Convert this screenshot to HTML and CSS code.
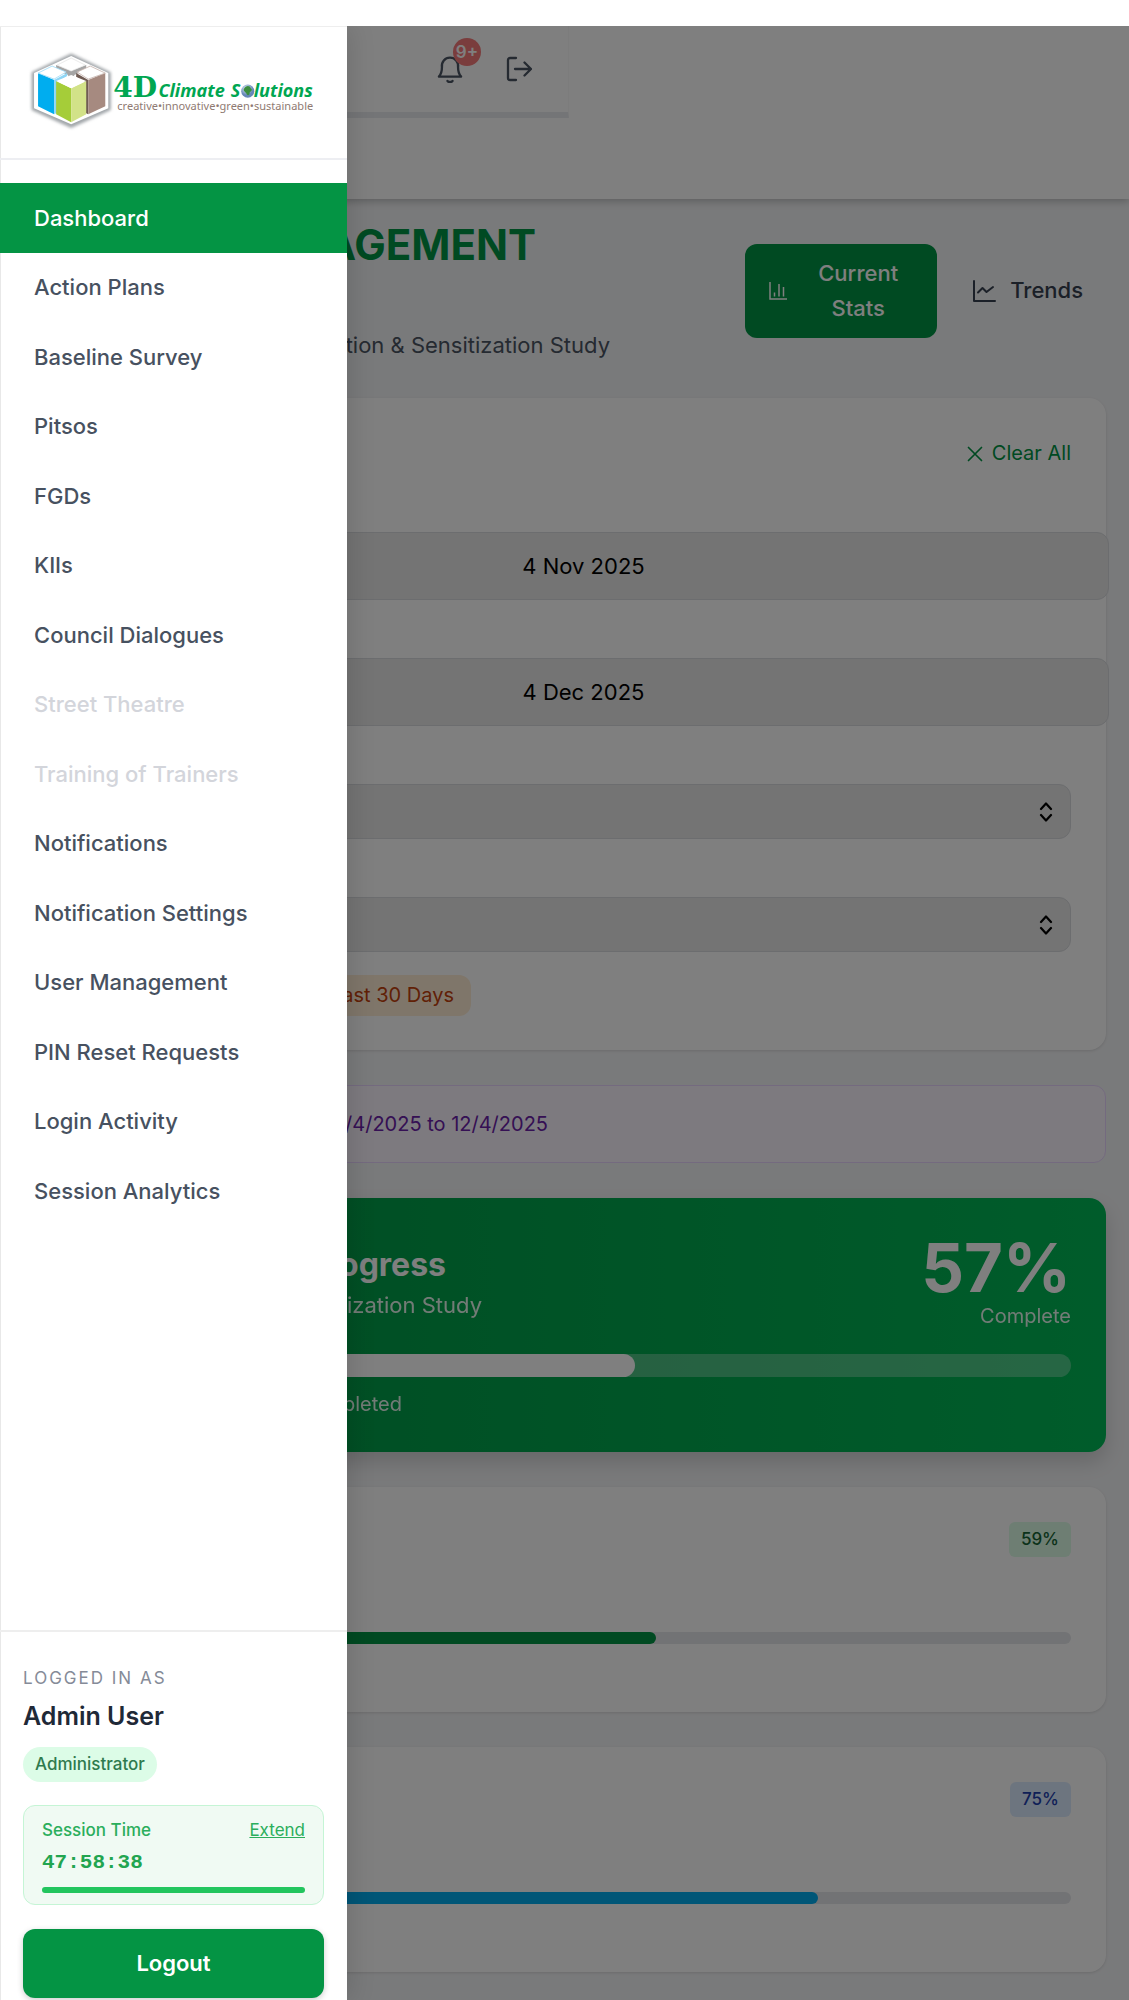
FILE: index.html
```html
<!DOCTYPE html>
<html lang="en">
<head>
<meta charset="utf-8">
<meta name="viewport" content="width=device-width, initial-scale=1">
<title>Dashboard</title>
<link rel="stylesheet" href="styles.css">
</head>
<body>
<div class="app">
  <header class="topbar">
    <div class="toolbar">
      <button class="icon-btn" type="button" aria-label="Notifications">
        <svg width="28" height="28" viewBox="0 0 24 24" fill="none" stroke="currentColor" stroke-width="2" stroke-linecap="round" stroke-linejoin="round"><path d="M2.500 18.500h19c-2-2.200-2.600-4.300-2.600-8A6.900 7.200 0 0 0 12 2.200a6.900 7.200 0 0 0-6.900 8.300c0 3.700-.6 5.800-2.600 8z"/><path d="M9.800 22.200c.8 1.300 3.600 1.300 4.400 0"/></svg>
        <span class="count">9+</span>
      </button>
      <button class="icon-btn" type="button" aria-label="Sign out">
        <svg width="26" height="26" viewBox="0 0 26 26" fill="none" stroke="currentColor" stroke-width="2.300" stroke-linecap="round" stroke-linejoin="round"><path d="M10 2H4a2 2 0 0 0-2 2v18a2 2 0 0 0 2 2h6M9 13h16M18.500 6.500L25 13l-6.500 6.500"/></svg>
      </button>
    </div>
  </header>

  <main class="content">
    <section class="page-head">
      <div class="titles">
        <h1>MANAGEMENT</h1>
        <p class="subtitle">Collection &amp; Sensitization Study</p>
      </div>
      <div class="views">
        <button class="view active" type="button">
          <svg width="20" height="20" viewBox="0 0 20 20" fill="none" stroke="currentColor" stroke-width="1.500"><path d="M2 1v17h17M6.500 15.500v-4M11 15.500V3M15.500 15.500V6"/></svg>
          <span>Current Stats</span>
        </button>
        <button class="view" type="button">
          <svg width="24" height="24" viewBox="0 0 24 24" fill="none" stroke="currentColor" stroke-width="2" stroke-linecap="round" stroke-linejoin="round"><path d="M2 2v20h21M6 13.500l4.500-4.500 4 4 6.500-5"/></svg>
          <span>Trends</span>
        </button>
      </div>
    </section>

    <section class="card filters" aria-label="Filters">
      <div class="filters-head">
        <button class="clear" type="button">
          <svg width="16" height="16" viewBox="0 0 16 16" stroke="currentColor" stroke-width="1.700" stroke-linecap="round"><path d="M1.500 1.500l13 13M14.500 1.500l-13 13"/></svg>
          Clear All
        </button>
      </div>
      <div class="field wide">
        <input type="text" value="4 Nov 2025" aria-label="Start date">
      </div>
      <div class="field wide">
        <input type="text" value="4 Dec 2025" aria-label="End date">
      </div>
      <div class="field picker">
        <select aria-label="District"></select>
        <svg width="14" height="20" viewBox="0 0 14 20" fill="none" stroke="#000" stroke-width="2.200" stroke-linecap="round" stroke-linejoin="round"><path d="M2 7l5-5.500L12 7M2 13l5 5.500 5-5.500"/></svg>
      </div>
      <div class="field picker">
        <select aria-label="Council"></select>
        <svg width="14" height="20" viewBox="0 0 14 20" fill="none" stroke="#000" stroke-width="2.200" stroke-linecap="round" stroke-linejoin="round"><path d="M2 7l5-5.500L12 7M2 13l5 5.500 5-5.500"/></svg>
      </div>
      <div class="presets">
        <button class="preset" type="button">Last 30 Days</button>
      </div>
    </section>

    <div class="notice"><p>11/4/2025 to 12/4/2025</p></div>

    <section class="progress-card">
      <div class="progress-head">
        <div>
          <h2>Progress</h2>
          <p class="study">Sensitization Study</p>
        </div>
        <div class="total">
          <strong>57%</strong>
          <span>Complete</span>
        </div>
      </div>
      <div class="bar bar-lg"><div class="fill" style="width:57%"></div></div>
      <p class="done">completed</p>
    </section>

    <section class="card stat">
      <span class="tag tag-green">59%</span>
      <div class="bar"><div class="fill green" style="width:59%"></div></div>
    </section>

    <section class="card stat">
      <span class="tag tag-blue">75%</span>
      <div class="bar"><div class="fill blue" style="width:75%"></div></div>
    </section>
  </main>

  <div class="scrim"></div>

  <aside class="drawer">
    <div class="brand">
      <svg class="logo" viewBox="0 0 300 86" role="img" aria-label="4D Climate Solutions">
        <defs>
          <filter id="soft" x="-20%" y="-20%" width="140%" height="140%"><feGaussianBlur stdDeviation="1.500"/></filter>
          <radialGradient id="globe" cx=".4" cy=".3"><stop offset="0" stop-color="#e4edf7"/><stop offset="1" stop-color="#6687b8"/></radialGradient>
        </defs>
        <path d="M48 6L86 24v36L48 77 10 60V24z" fill="#a3a7ab" stroke="#a3a7ab" stroke-width="3" stroke-linejoin="round" filter="url(#soft)"/>
        <path d="M48 7L85 24v35L48 75 11 59V24z" fill="#fff"/>
        <path d="M33 16l15 6 15-6v5l-12 5v4h-6v-4l-12-5z" fill="#a5a5a5"/>
        <path d="M48 9l14 7-14 6-14-6z" fill="#fff" stroke="#ddd" stroke-width=".6"/>
        <path d="M15 24l16 7v34l-16-8z" fill="#00adef"/>
        <path d="M31 31l13-7v3l-9 6v30l-4 2z" fill="#8fd6f5"/>
        <path d="M15 24l14-7 14 6-12 7z" fill="#fff" stroke="#9bdaf6" stroke-width=".8"/>
        <path d="M53 24l12 7v34l-4-2V33l-8-5z" fill="#705c54"/>
        <path d="M65 31l17-7v33l-17 8z" fill="#a68a80"/>
        <path d="M54 23l13-6 15 7-17 6z" fill="#fff" stroke="#c4b2ab" stroke-width=".8"/>
        <path d="M33 32l15 7v34l-15-8z" fill="#a5cd39"/>
        <path d="M48 39l15-7v33l-15 8z" fill="#d2e288"/>
        <path d="M33 32l15-6 15 6-15 7z" fill="#fff"/>
        <g fill="#00a651">
          <text x="90" y="48" class="logo-4d">4D</text>
          <text x="135" y="48" class="logo-name">Climate</text>
          <text x="207" y="48" class="logo-name">S</text>
          <text x="230" y="48" class="logo-name">lutions</text>
        </g>
        <circle cx="224" cy="42" r="6.500" fill="url(#globe)"/>
        <path d="M220 40c2-4 6-4 7-1 2 1 1 3-1 4 0 3-2 4-3 2-1-3-3-2-3-5z" fill="#3c8f3f"/>
        <text x="94" y="61" class="logo-tag">creative•innovative•green•sustainable</text>
      </svg>
    </div>
    <nav class="menu" aria-label="Main">
      <a class="active" href="#">Dashboard</a>
      <a href="#">Action Plans</a>
      <a href="#">Baseline Survey</a>
      <a href="#">Pitsos</a>
      <a href="#">FGDs</a>
      <a href="#">KIIs</a>
      <a href="#">Council Dialogues</a>
      <a class="disabled" href="#" aria-disabled="true">Street Theatre</a>
      <a class="disabled" href="#" aria-disabled="true">Training of Trainers</a>
      <a href="#">Notifications</a>
      <a href="#">Notification Settings</a>
      <a href="#">User Management</a>
      <a href="#">PIN Reset Requests</a>
      <a href="#">Login Activity</a>
      <a href="#">Session Analytics</a>
    </nav>
    <div class="account">
      <p class="caption">LOGGED IN AS</p>
      <p class="user">Admin User</p>
      <span class="role">Administrator</span>
      <div class="session">
        <div class="session-head"><span>Session Time</span><a href="#">Extend</a></div>
        <p class="clock">47:58:38</p>
        <div class="session-bar"></div>
      </div>
      <button class="logout" type="button">Logout</button>
    </div>
  </aside>
</div>
</body>
</html>
```
FILE: styles.css
```css
* { box-sizing: border-box; }

body {
  margin: 0;
  padding-top: 26px;
  background: #fff;
  font-family: Inter, "Liberation Sans", sans-serif;
  font-size: 22px;
  line-height: 35px;
  color: #374151;
}

h1, h2, p { margin: 0; }
svg { display: block; flex: none; }
button, input, select { font: inherit; color: inherit; }
button { border: 0; background: none; padding: 0; }

.app {
  position: relative;
  min-height: calc(100vh - 26px);
  overflow: hidden;
  background: #f3f4f6;
}

/* Top bar */
.topbar {
  min-height: 173px;
  background: #fff;
  box-shadow: 0 2px 8px rgba(0, 0, 0, .25);
}
.toolbar {
  display: flex;
  justify-content: flex-end;
  align-items: center;
  gap: 42px;
  max-width: 569px;
  height: 92px;
  padding-right: 36px;
  border-right: 1px solid #f8f8f8;
  border-bottom: 6px solid #e9ebef;
}
.icon-btn { position: relative; color: #4b5563; }
.count {
  position: absolute;
  left: 17px;
  top: -17px;
  width: 28px;
  height: 28px;
  border-radius: 50%;
  background: #f57a7a;
  color: #fff;
  font-size: 17px;
  font-weight: 600;
  line-height: 29px;
  text-align: center;
}

/* Content */
.content {
  display: flex;
  flex-direction: column;
  gap: 35px;
  padding: 19px 23px 27px;
}
.page-head {
  display: flex;
  align-items: center;
  justify-content: space-between;
}
.titles {
  width: 587px;
  text-align: right;
}
h1 {
  min-height: 104px;
  margin-right: 74px;
  color: #009444;
  font-size: 42px;
  font-weight: 700;
  line-height: 54px;
}
.subtitle { margin-top: 6px; color: #4b5563; }
.views { display: flex; gap: 12px; }
.view {
  display: flex;
  align-items: center;
  gap: 14px;
  padding: 12px 23px;
  border-radius: 12px;
  font-weight: 500;
}
.view.active {
  width: 192px;
  background: #009444;
  color: #fff;
}
.view.active span { flex: 1; }

.card {
  border-radius: 17px;
  background: #fff;
  padding: 35px;
  box-shadow: 0 1px 3px rgba(0, 0, 0, .12);
}
.filters { padding-bottom: 34px; }
.filters-head {
  display: flex;
  justify-content: flex-end;
  align-items: center;
  height: 41px;
}
.clear {
  display: flex;
  align-items: center;
  gap: 9px;
  color: #009444;
  font-size: 20px;
}
.field { margin-top: 58px; }
.field.wide { margin-right: -38px; }
.field input, .field select {
  display: block;
  width: 100%;
  border: 1px solid #d8dade;
  border-radius: 12px;
  background: #e8e8e8;
  color: #000;
  outline: 0;
}
.field input { height: 68px; text-align: center; }
.field select {
  grid-area: 1 / 1;
  height: 55px;
  padding: 0 23px;
  appearance: none;
}
.picker { display: grid; align-items: center; }
.picker svg {
  grid-area: 1 / 1;
  justify-self: end;
  margin-right: 18px;
  pointer-events: none;
}
.presets {
  display: flex;
  justify-content: flex-end;
  width: 413px;
  margin-top: 23px;
}
.preset {
  padding: 6px 17px;
  border-radius: 12px;
  background: #ffedd5;
  color: #c2410c;
  font-size: 20px;
  line-height: 29px;
}

.notice {
  padding: 23px 35px;
  border: 1px solid #e9d5ff;
  border-radius: 12px;
  background: #faf5ff;
  color: #6b21a8;
  font-size: 20px;
  line-height: 30px;
}
.notice p { width: 489px; text-align: right; }

.progress-card {
  padding: 35px 35px 33px;
  border-radius: 17px;
  background: linear-gradient(to right, #009444, #00b956);
  box-shadow: 0 10px 20px rgba(0, 0, 0, .15);
  color: #fff;
}
.progress-head {
  display: flex;
  justify-content: space-between;
  align-items: center;
}
.progress-head h2 {
  width: 388px;
  font-size: 32px;
  font-weight: 700;
  line-height: 46px;
  text-align: right;
}
.study { width: 424px; opacity: .9; text-align: right; }
.total { text-align: right; }
.total strong {
  display: block;
  font-size: 67px;
  font-weight: 700;
  line-height: 69px;
}
.total span {
  display: block;
  font-size: 20px;
  line-height: 29px;
  opacity: .9;
}
.bar {
  height: 12px;
  border-radius: 12px;
  background: #e5e7eb;
  overflow: hidden;
}
.fill { height: 100%; border-radius: 12px; background: #fff; }
.fill.green { background: #009444; }
.fill.blue { background: #00adef; }
.bar-lg {
  height: 23px;
  margin-top: 23px;
  background: rgba(255, 255, 255, .3);
}
.done {
  width: 344px;
  margin-top: 12px;
  font-size: 20px;
  line-height: 30px;
  opacity: .9;
  text-align: right;
}

.stat {
  display: flex;
  flex-direction: column;
  gap: 75px;
  padding-bottom: 68px;
}
.tag {
  align-self: flex-end;
  padding: 0 12px;
  border-radius: 6px;
  font-size: 17px;
  font-weight: 500;
}
.tag-green { background: #dcfce7; color: #166534; }
.tag-blue { background: #dbeafe; color: #1e40af; }

/* Overlay and drawer */
.scrim {
  position: absolute;
  inset: 0;
  background: rgba(0, 0, 0, .5);
}
.drawer {
  position: absolute;
  top: 0;
  bottom: 0;
  left: 0;
  display: flex;
  flex-direction: column;
  width: 347px;
  background: #fff;
  border-top: 1px solid #eee;
  box-shadow: inset 1px 0 #e8e8e8, 4px 0 24px rgba(0, 0, 0, .12);
}
.brand {
  padding: 22px 23px 23px;
  border-bottom: 2px solid #edeef2;
}
.logo { width: 100%; height: auto; }
.logo-4d { font: bold 28px "DejaVu Serif", serif; }
.logo-name { font: italic 700 18px "Open Sans", sans-serif; }
.logo-tag { font: 11px "Noto Sans", sans-serif; fill: #8f7a72; }

.menu {
  display: grid;
  grid-auto-rows: 1fr;
  min-height: 1043px;
  margin-top: 23px;
}
.menu a {
  display: flex;
  align-items: center;
  padding: 0 34px;
  color: #475160;
  font-weight: 500;
  text-decoration: none;
}
.menu .active { background: #049444; color: #fff; }
.menu .disabled { color: #d3d5db; }

.account {
  display: flex;
  flex-direction: column;
  align-items: flex-start;
  margin-top: auto;
  padding: 33px 23px 2px;
  border-top: 2px solid #eee;
}
.caption {
  color: #858b98;
  font-size: 17px;
  letter-spacing: 2px;
  line-height: 26px;
}
.user {
  margin-top: 5px;
  color: #1f2937;
  font-size: 25px;
  font-weight: 600;
  line-height: 40px;
}
.role {
  margin-top: 11px;
  padding: 0 12px;
  border-radius: 18px;
  background: #dcfce7;
  color: #2f7a4e;
  font-size: 17px;
  font-weight: 500;
}
.session {
  width: 100%;
  margin-top: 23px;
  padding: 11px 18px;
  border: 1px solid #c5f5d5;
  border-radius: 12px;
  background: #f0faf3;
  color: #2bae5c;
  font-size: 17px;
  font-weight: 500;
  line-height: 26px;
}
.session-head { display: flex; justify-content: space-between; }
.session-head a { color: inherit; font-weight: 400; }
.clock {
  margin-top: 4px;
  color: #22a550;
  font: bold 21px/32px "Liberation Mono", monospace;
}
.session-bar {
  height: 6px;
  margin-top: 8px;
  border-radius: 3px;
  background: #22c55e;
}
.logout {
  width: 100%;
  height: 69px;
  margin-top: 24px;
  border-radius: 12px;
  background: #049444;
  box-shadow: 0 2px 6px rgba(0, 0, 0, .2);
  color: #fff;
  font-weight: 600;
}
```
